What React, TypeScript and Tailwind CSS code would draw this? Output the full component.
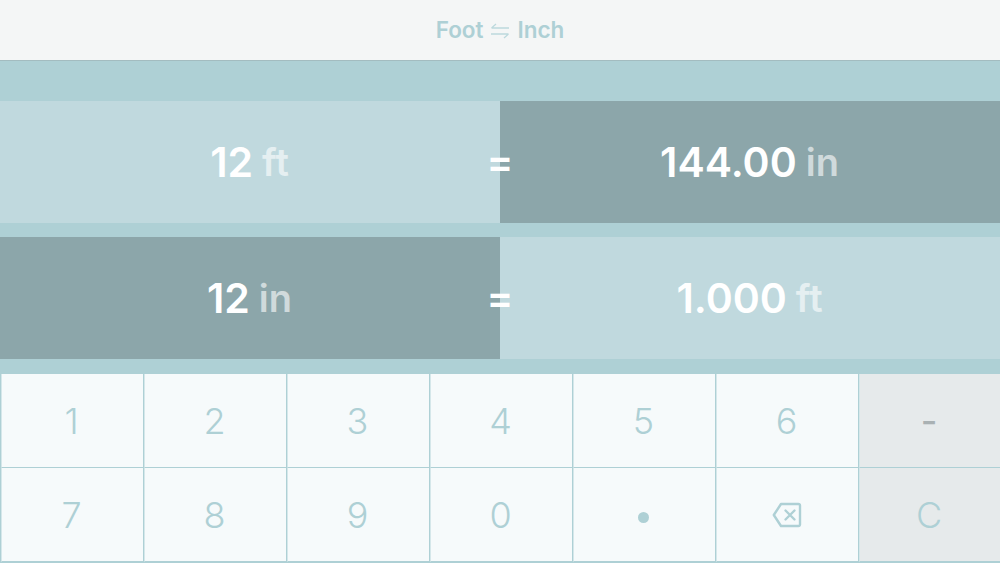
const keys = ["1", "2", "3", "4", "5", "6", "-", "7", "8", "9", "0", "dot", "back", "C"];

function ConvertRow({ left, right, dark }: { left: [string, string]; right: [string, string]; dark: "left" | "right" }) {
  return (
    <div className="relative flex h-[122px]">
      <Side value={left[0]} unit={left[1]} dark={dark === "left"} />
      <Side value={right[0]} unit={right[1]} dark={dark === "right"} />
      <span className="absolute left-1/2 top-[34px] -translate-x-1/2 text-[40px] leading-[54px] font-semibold text-white">=</span>
    </div>
  );
}

function Side({ value, unit, dark }: { value: string; unit: string; dark: boolean }) {
  return (
    <div className={`flex w-1/2 items-center justify-center gap-[9px] pt-px pr-px font-semibold ${dark ? "bg-[#8ca6aa]" : "bg-[#c0d9de]"}`}>
      <span className="text-[41px] text-white">{value}</span>
      <span className="text-[38px] text-white/60">{unit}</span>
    </div>
  );
}

function Key({ label, index }: { label: string; index: number }) {
  const side = index === 6 || index === 13;
  return (
    <div className={`flex items-center justify-center border-b border-l border-b-[#aed0d5] border-l-[#d5e7ea] text-[36px] font-light ${side ? "bg-[#e6eaeb] pr-[3px]" : "border-r border-r-[#aed0d5] bg-[#f6fafb] pr-0.5"} ${label === "-" ? "font-medium text-[#a9b1b3]" : "text-[#aed0d5]"}`}>
      {label === "dot" && <span className="mt-1.5 h-[11px] w-[11px] rounded-full bg-[#aed0d5]" />}
      {label === "back" && (
        <svg width="30" height="26" viewBox="0 0 30 26" fill="none" stroke="#aed0d5" strokeWidth="2.4" strokeLinejoin="round" strokeLinecap="round">
          <path d="M9 2h17.500a1.500 1.500 0 0 1 1.500 1.500v19a1.500 1.500 0 0 1-1.500 1.500H9L1.800 13z" />
          <path d="M13.500 8.500l9 9M22.500 8.500l-9 9" />
        </svg>
      )}
      {label !== "dot" && label !== "back" && label}
    </div>
  );
}

export default function App() {
  return (
    <div className="flex h-[563px] w-[1000px] flex-col overflow-hidden bg-[#aed0d5] font-['Inter',sans-serif]">
      <header className="flex h-[61px] items-center justify-center gap-[7px] border-b border-[#a3bcc0] bg-[#f4f6f6] text-[22.500px] font-semibold text-[#aed0d5]">
        <span>Foot</span>
        <svg width="20" height="16" viewBox="0 0 20 16" fill="none" stroke="#bcd9dd" strokeWidth="1.300" className="mt-px">
          <path d="M19 5H1.500M6 1L1.500 5" />
          <path d="M1 11h17.500M14 15l4.500-4" />
        </svg>
        <span>Inch</span>
      </header>
      <div className="mt-10 flex flex-col gap-[14px]">
        <ConvertRow left={["12", "ft"]} right={["144.00", "in"]} dark="right" />
        <ConvertRow left={["12", "in"]} right={["1.000", "ft"]} dark="left" />
      </div>
      <div className="mt-[15px] grid h-[188px] grid-cols-[143px_143px_143px_143px_143px_143px_142px] grid-rows-2 pl-px">
        {keys.map((label, i) => (
          <Key key={i} label={label} index={i} />
        ))}
      </div>
    </div>
  );
}
